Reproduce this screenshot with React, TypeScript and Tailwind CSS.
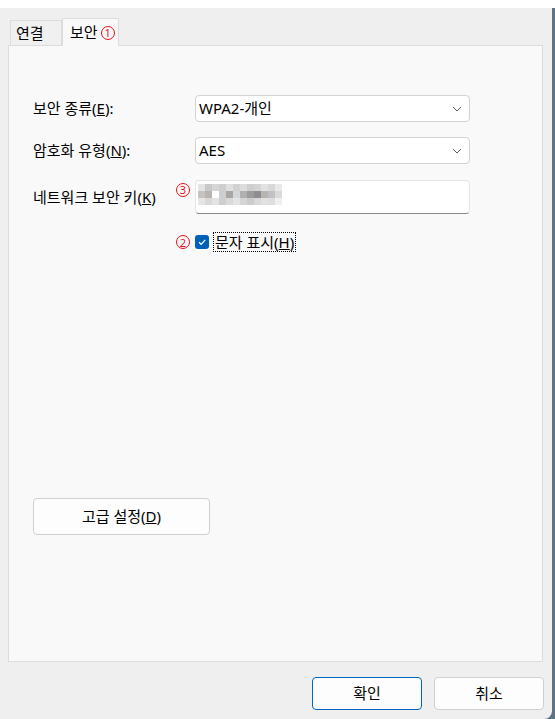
import React from 'react'

const font = { fontFamily: '"Noto Sans", "Noto Sans CJK KR", sans-serif' }

// mosaic colours for the blurred key
const mosaic = [
  ['#e4e4e4', '#c9c9c9', '#d6d6d6', '#cfcfcf', '#e0e0e0', '#d2d2d2', '#dcdcdc', '#cfcfcf', '#d4d4d4', '#e2e2e2', '#d8d8d8', '#e9e9e9'],
  ['#c6c2bf', '#b8b4b1', '#ffffff', '#cbcfd2', '#a9a6a4', '#d4d7da', '#b1b0b1', '#9d9b9c', '#8f8d91', '#b7b4b2', '#c2c0c3', '#dadada'],
  ['#e6e6e6', '#d9d9d9', '#e3e3e3', '#cfcfcf', '#dadada', '#e4e4e4', '#d5d5d5', '#cccccc', '#d9d9d9', '#e1e1e1', '#dedede', '#efefef'],
]

function Circled({ n }: { n: number }) {
  return (
    <span className="inline-flex items-center justify-center w-[14px] h-[14px] rounded-full border border-[#e3131b] text-[#e3131b] text-[11px] leading-none">
      {n}
    </span>
  )
}

function Chevron() {
  return (
    <svg width="10" height="6" viewBox="0 0 10 6" className="text-[#5c5c5c]">
      <path d="M1 1 L5 5 L9 1" fill="none" stroke="currentColor" strokeWidth="1" />
    </svg>
  )
}

function Select({ value }: { value: string }) {
  return (
    <div className="w-[275px] h-[27px] bg-white border border-[#d3d3d3] rounded-[4px] flex items-center justify-between pl-[3px] pr-[7px] text-[15px] text-black">
      <span>{value}</span>
      <Chevron />
    </div>
  )
}

export default function App() {
  return (
    <div className="w-[555px] h-[719px] bg-[#5e7480] overflow-hidden" style={font}>
      <div className="w-[552px] h-full bg-[#efefef] rounded-br-[8px] flex flex-col">
        <div className="h-[8px] bg-white w-[555px]" />

        {/* tabs */}
        <div className="h-[37px] pl-[10px] flex items-end relative z-10">
          <div className="h-[25px] w-[52px] border border-b-0 border-[#dcdcdc] bg-[#f0f0f0] flex items-center pl-[5px] text-[15px] text-black">
            연결
          </div>
          <div className="h-[28px] w-[57px] border border-b-0 border-[#dcdcdc] bg-[#f9f9f9] flex items-center gap-[3px] pl-[7px] text-[15px] text-black -mb-px">
            보안
            <Circled n={1} />
          </div>
        </div>

        {/* panel */}
        <div className="ml-[8px] w-[535px] h-[617px] border border-[#dcdcdc] bg-[#f9f9f9] pl-[24px] pt-[49px] text-[15px] text-black">
          <div className="flex items-center h-[27px]">
            <span className="w-[162px]">
              보안 종류(<u>E</u>):
            </span>
            <Select value="WPA2-개인" />
          </div>
          <div className="flex items-center h-[27px] mt-[15px]">
            <span className="w-[162px]">
              암호화 유형(<u>N</u>):
            </span>
            <Select value="AES" />
          </div>
          <div className="flex items-center h-[34px] mt-[16px] relative">
            <span className="w-[162px]">
              네트워크 보안 키(<u>K</u>)
            </span>
            <span className="absolute left-[143px] top-[-3px]">
              <Circled n={3} />
            </span>
            <div className="w-[275px] h-[34px] bg-white border border-[#e5e5e5] border-b-[#8a8a8a] rounded-[4px] pl-[2px] pt-[3px]">
              <div className="flex flex-col">
                {mosaic.map((row, i) => (
                  <div key={i} className="flex">
                    {row.map((c, j) => (
                      <div key={j} className="w-[7px] h-[7px]" style={{ background: c }} />
                    ))}
                  </div>
                ))}
              </div>
            </div>
          </div>

          <div className="flex items-center h-[20px] mt-[18px] ml-[143px]">
            <Circled n={2} />
            <span className="ml-[5px] w-[14px] h-[14px] rounded-[3px] bg-[#005fb8] flex items-center justify-center">
              <svg width="10" height="10" viewBox="0 0 10 10">
                <path d="M2 5.2 L4.2 7.3 L8.2 2.8" fill="none" stroke="white" strokeWidth="1.2" />
              </svg>
            </span>
            <span className="ml-[4px] px-[1px] border border-dotted border-black leading-[18px]">
              문자 표시(<u>H</u>)
            </span>
          </div>

          <button className="mt-[246px] w-[177px] h-[37px] bg-[#fdfdfd] border border-[#d0d0d0] rounded-[4px] text-[15px] text-black">
            고급 설정(<u>D</u>)
          </button>
        </div>

        {/* footer */}
        <div className="flex justify-end gap-[12px] pr-[8px] mt-[15px]">
          <button className="w-[110px] h-[33px] bg-[#fdfdfd] border border-[#0067c0] rounded-[4px] text-[15px] text-black">
            확인
          </button>
          <button className="w-[110px] h-[33px] bg-[#fdfdfd] border border-[#d0d0d0] rounded-[4px] text-[15px] text-black">
            취소
          </button>
        </div>
      </div>
    </div>
  )
}
